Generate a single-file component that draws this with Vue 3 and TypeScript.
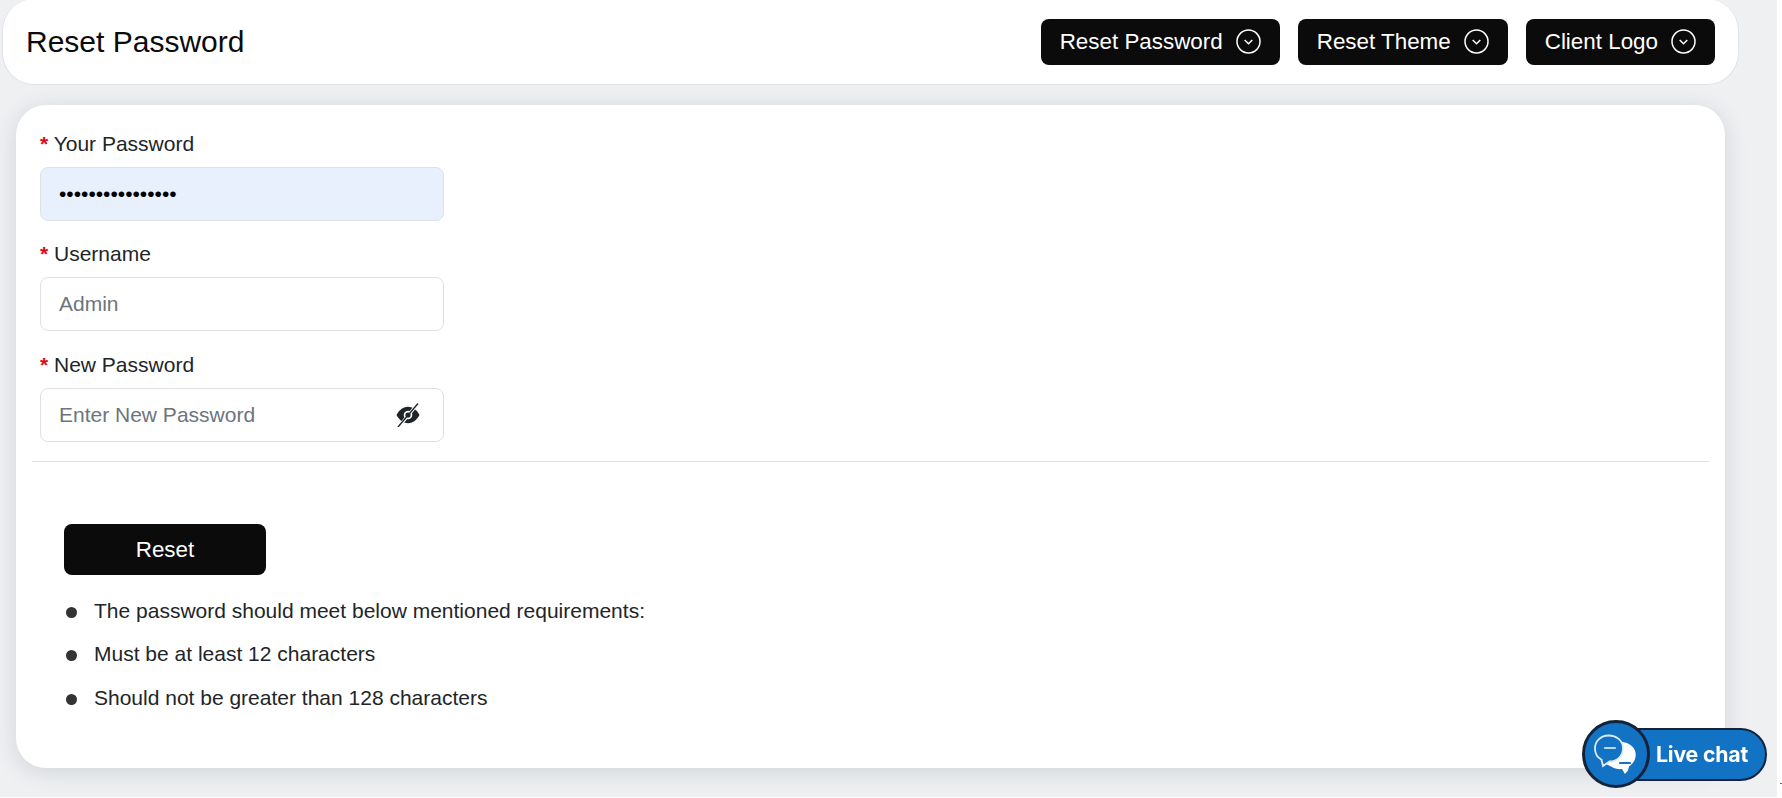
<script setup lang="ts">
const actions: { label: string }[] = [
  { label: 'Reset Password' },
  { label: 'Reset Theme' },
  { label: 'Client Logo' },
]
const rules: string[] = [
  'The password should meet below mentioned requirements:',
  'Must be at least 12 characters',
  'Should not be greater than 128 characters',
]
</script>

<template>
  <div class="page">
    <div class="canvas">
      <header class="topbar">
        <h1 class="title">Reset Password</h1>
        <nav class="actions">
          <button v-for="a in actions" :key="a.label" class="action" type="button">
            <span>{{ a.label }}</span>
            <svg class="chev" viewBox="0 0 25 25" fill="none" stroke="#fff">
              <circle cx="12.5" cy="12.5" r="11.5" stroke-width="1.5" />
              <path d="M8.7 11l3.8 3.8 3.8-3.800" stroke-width="1.5" />
            </svg>
          </button>
        </nav>
      </header>

      <main class="card">
        <form class="fields" @submit.prevent>
          <div class="field">
            <label class="label"><i class="req">*</i> Your Password</label>
            <div class="input filled"><span class="dots">••••••••••••••••</span></div>
          </div>
          <div class="field">
            <label class="label"><i class="req">*</i> Username</label>
            <div class="input"><span class="ph">Admin</span></div>
          </div>
          <div class="field">
            <label class="label"><i class="req">*</i> New Password</label>
            <div class="input">
              <span class="ph">Enter New Password</span>
              <svg class="eye" viewBox="0 0 24 24">
                <path d="M.5 12C3.500 6.500 7.500 3.800 12 3.800S20.500 6.500 23.500 12c-3 5.500-7 8.200-11.500 8.200S3.500 17.500.5 12z" fill="#212529" />
                <circle cx="12" cy="12" r="4.300" fill="#fff" />
                <path d="M3 23.500L21.500 1" stroke="#fff" stroke-width="3.200" />
                <circle cx="12" cy="12" r="2.600" fill="#212529" />
                <path d="M12.600 11.800a1.500 1.500 0 0 0-1.800 1.800z" fill="#fff" />
                <path d="M2 24L22 .5" stroke="#212529" stroke-width="1.400" />
              </svg>
            </div>
          </div>
        </form>

        <hr class="rule" />

        <section class="foot">
          <button class="reset" type="button">Reset</button>
          <ul class="reqs">
            <li v-for="r in rules" :key="r"><span class="dot"></span>{{ r }}</li>
          </ul>
        </section>
      </main>
    </div>

    <aside class="chat">
      <span class="chat-pill">Live chat</span>
      <span class="chat-disc">
        <svg viewBox="3 3 62 62" width="62" height="62">
          <path d="M34 23c3-1.500 8-1.500 12 .500 6 3 8.500 8 7.500 13.500-.600 4-3 7-6.500 9.500l-1 4-3 3.500-3-5c-4 .500-7-.300-10-2l-6-3z" fill="#fff" />
          <path d="M26.500 15.500c-7.500 0-13.500 5.500-13.500 13 0 5 2.500 9 6.500 11.200l1.500 6.300 6.500-4.500c7.500 0 13.500-5.500 13.500-13s-6-13-14.500-13z" fill="#1272c4" stroke="#dcebf8" stroke-width="1.800" />
          <path d="M23 28h10" stroke="#bcd8f0" stroke-width="2.200" stroke-linecap="round" />
          <path d="M38 43h10" stroke="#1272c4" stroke-width="2.200" stroke-linecap="round" />
        </svg>
      </span>
    </aside>
    <span class="speck"></span>
  </div>
</template>

<style>
html, body {
  margin: 0;
  background: #fff;
}
</style>

<style scoped>
.page {
  position: relative;
  width: 1782px;
  height: 798px;
  overflow: hidden;
  background: #fff;
  font-family: "Liberation Sans", Arial, sans-serif;
  color: #212529;
}
.canvas {
  width: 1777px;
  height: 797px;
  overflow: hidden;
  background: #eef0f2;
}
.topbar {
  box-sizing: border-box;
  width: 1737px;
  height: 86px;
  margin: -1px 0 0 2px;
  padding: 0 23px;
  display: flex;
  align-items: center;
  justify-content: space-between;
  background: #fff;
  border: 1px solid #dfe3e8;
  border-top: 0;
  border-radius: 32px;
}
.title {
  margin: 0;
  font-size: 30px;
  font-weight: 400;
  color: #0b0b0b;
}
.actions {
  display: flex;
  gap: 18px;
}
.action {
  display: flex;
  align-items: center;
  gap: 13px;
  height: 46px;
  padding: 0 19px;
  border: 0;
  border-radius: 8px;
  background: #0b0b0b;
  color: #fff;
  font: 400 22.400px "Liberation Sans", Arial, sans-serif;
}
.chev {
  width: 25px;
  height: 25px;
  flex: none;
}
.card {
  box-sizing: border-box;
  width: 1709px;
  height: 663px;
  margin: 20px 0 0 16px;
  padding: 25px 16px 0;
  background: #fff;
  border-radius: 30px;
  box-shadow: 0 4px 22px rgba(60, 70, 85, 0.16);
}
.fields {
  display: flex;
  flex-direction: column;
  gap: 19.250px;
  padding-left: 8px;
}
.field {
  display: flex;
  flex-direction: column;
  gap: 9px;
}
.label {
  font-size: 21px;
  line-height: 28px;
}
.req {
  color: #e30613;
  font-style: normal;
  font-weight: 700;
}
.input {
  box-sizing: border-box;
  width: 404px;
  height: 54px;
  padding: 0 18px;
  display: flex;
  align-items: center;
  justify-content: space-between;
  border: 1px solid #dee2e6;
  border-radius: 8px;
  background: #fff;
  font-size: 21px;
}
.filled {
  background: #e8f0fe;
}
.dots {
  color: #000;
  font-size: 21px;
}
.ph {
  color: #6c757d;
}
.eye {
  width: 24px;
  height: 24px;
  margin-right: 5px;
}
.rule {
  margin: 19.500px 0 0;
  border: 0;
  border-top: 1px solid #dee2e6;
}
.foot {
  padding: 62px 32px 0;
}
.reset {
  display: block;
  width: 202px;
  height: 51px;
  border: 0;
  border-radius: 8px;
  background: #0b0b0b;
  color: #fff;
  font: 400 22.400px "Liberation Sans", Arial, sans-serif;
}
.reqs {
  margin: 14px 0 0;
  padding: 0 0 0 2px;
  list-style: none;
  font-size: 21px;
  line-height: 43.400px;
}
.reqs li {
  display: flex;
  align-items: center;
  gap: 18px;
}
.dot {
  flex: none;
  width: 11px;
  height: 11px;
  margin-right: -1px;
  margin-top: 3px;
  border-radius: 50%;
  background: #333;
}
.chat {
  position: absolute;
  left: 1582px;
  top: 720px;
  width: 185px;
  height: 68px;
  filter: blur(0.6px);
}
.chat-pill {
  position: absolute;
  left: 30px;
  right: 0;
  top: 8px;
  height: 53px;
  box-sizing: border-box;
  padding-left: 42px;
  padding-bottom: 2px;
  display: flex;
  align-items: center;
  border: 2.500px solid #14233a;
  border-radius: 27px;
  background: #1272c4;
  color: #fff;
  font: 700 21.300px Inter, "Liberation Sans", sans-serif;
  letter-spacing: -0.2px;
}
.chat-disc {
  position: absolute;
  left: 0;
  top: 0;
  box-sizing: border-box;
  width: 68px;
  height: 68px;
  display: flex;
  align-items: center;
  justify-content: center;
  border: 3px solid #14233a;
  border-radius: 50%;
  background: #1272c4;
}
.speck {
  position: absolute;
  left: 1780px;
  top: 783px;
  width: 2px;
  height: 1px;
  background: #666;
}
</style>
